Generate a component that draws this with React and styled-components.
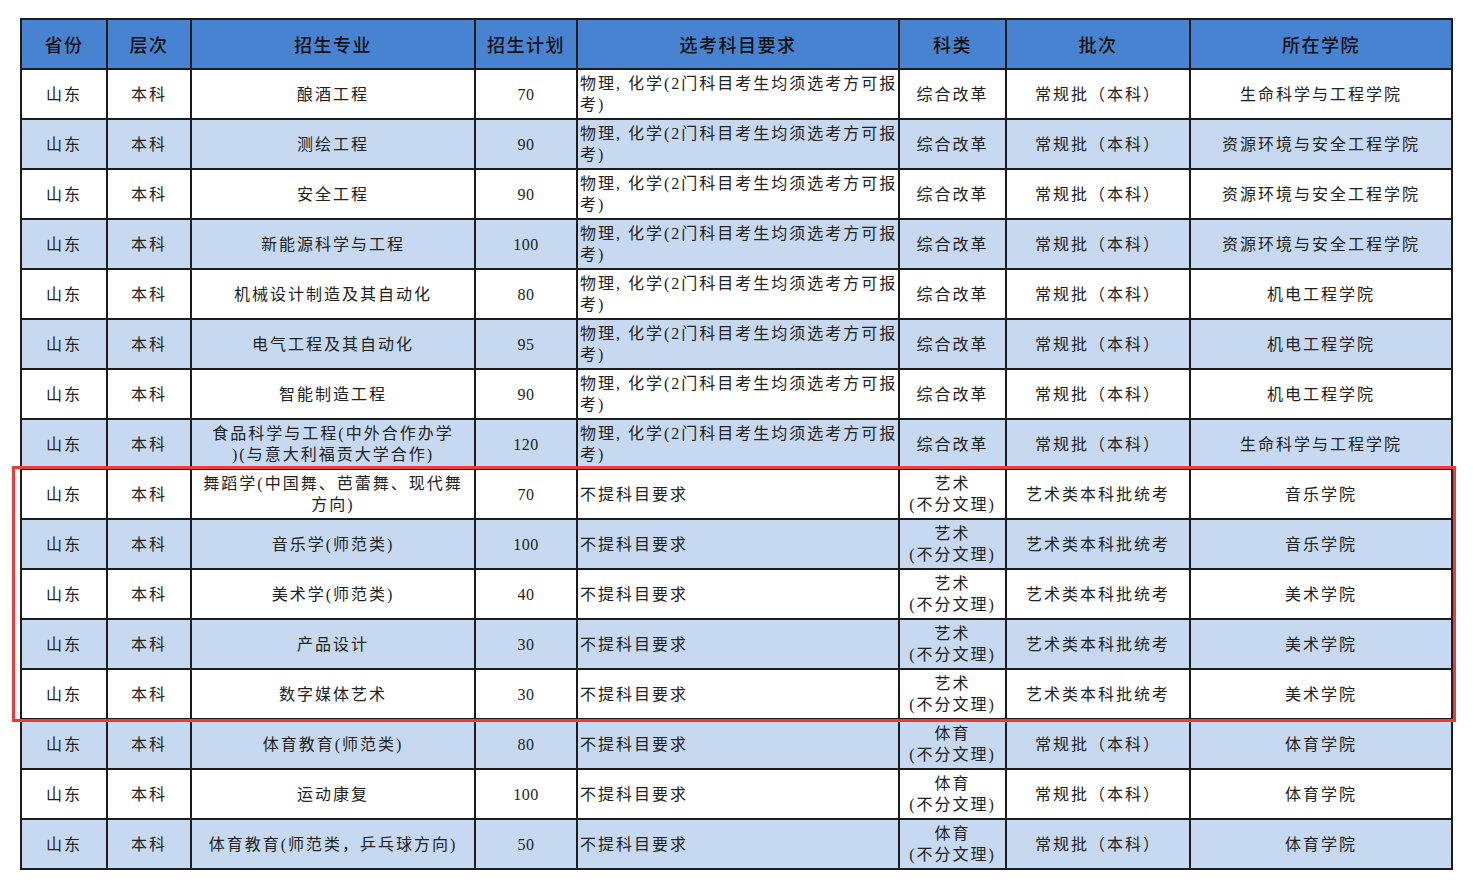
import React from "react";
import styled, { createGlobalStyle } from "styled-components";

const Global = createGlobalStyle`
  html, body { margin: 0; padding: 0; background: #ffffff; }
  body { font-family: "Liberation Serif", "Noto Sans CJK SC", serif; color: #1e1e1e; }
`;

const Page = styled.div`
  padding: 18px 0 0 20px;
  width: 1473px;
  box-sizing: border-box;
`;

const Frame = styled.div`
  position: relative;
  width: 1431px;
`;

const Table = styled.table`
  border-collapse: collapse;
  table-layout: fixed;
  width: 1431px;
  border: 2px solid #1c1c1c;
`;

const HeadCell = styled.th`
  background: #4783d0;
  border: 2px solid #1c1c1c;
  height: 48px;
  padding: 0;
  font-family: "Noto Sans CJK SC", sans-serif;
  font-size: 18px;
  font-weight: 500;
  letter-spacing: 1.5px;
  color: #111;
  text-align: center;
  vertical-align: middle;
`;

const Row = styled.tr`
  background: ${(p) => (p.$alt ? "#c6d9f1" : "#ffffff")};
`;

const Cell = styled.td`
  border: 2px solid #1c1c1c;
  height: 48px;
  padding: 0 ${(p) => (p.$left ? "2px" : "0")};
  font-family: ${(p) =>
    p.$num ? '"Liberation Serif", serif' : '"Liberation Serif", "Noto Sans CJK SC", serif'};
  font-size: 16px;
  letter-spacing: ${(p) => (p.$num ? "0.5px" : "2px")};
  line-height: 21px;
  color: #222;
  text-align: ${(p) => (p.$left ? "left" : "center")};
  vertical-align: middle;
  white-space: nowrap;
  overflow: hidden;
`;

const Line = styled.div`
  white-space: nowrap;
`;

const Highlight = styled.div`
  position: absolute;
  left: -8px;
  top: 448px;
  width: 1438px;
  height: 250px;
  border: 3px solid #ec3b3b;
  pointer-events: none;
`;

const cols = [86, 84, 284, 102, 322, 107, 184, 262];
const heads = ["省份", "层次", "招生专业", "招生计划", "选考科目要求", "科类", "批次", "所在学院"];

const REQ = ["物理, 化学(2门科目考生均须选考方可报", "考)"];
const NONE = ["不提科目要求"];
const ZH = ["综合改革"];
const ART = ["艺术", "(不分文理)"];
const PE = ["体育", "(不分文理)"];
const NORMAL = "常规批（本科）";
const ARTB = "艺术类本科批统考";

const rows = [
  [["酿酒工程"], "70", REQ, ZH, NORMAL, "生命科学与工程学院"],
  [["测绘工程"], "90", REQ, ZH, NORMAL, "资源环境与安全工程学院"],
  [["安全工程"], "90", REQ, ZH, NORMAL, "资源环境与安全工程学院"],
  [["新能源科学与工程"], "100", REQ, ZH, NORMAL, "资源环境与安全工程学院"],
  [["机械设计制造及其自动化"], "80", REQ, ZH, NORMAL, "机电工程学院"],
  [["电气工程及其自动化"], "95", REQ, ZH, NORMAL, "机电工程学院"],
  [["智能制造工程"], "90", REQ, ZH, NORMAL, "机电工程学院"],
  [["食品科学与工程(中外合作办学", ")(与意大利福贡大学合作)"], "120", REQ, ZH, NORMAL, "生命科学与工程学院"],
  [["舞蹈学(中国舞、芭蕾舞、现代舞", "方向)"], "70", NONE, ART, ARTB, "音乐学院"],
  [["音乐学(师范类)"], "100", NONE, ART, ARTB, "音乐学院"],
  [["美术学(师范类)"], "40", NONE, ART, ARTB, "美术学院"],
  [["产品设计"], "30", NONE, ART, ARTB, "美术学院"],
  [["数字媒体艺术"], "30", NONE, ART, ARTB, "美术学院"],
  [["体育教育(师范类)"], "80", NONE, PE, NORMAL, "体育学院"],
  [["运动康复"], "100", NONE, PE, NORMAL, "体育学院"],
  [["体育教育(师范类，乒乓球方向)"], "50", NONE, PE, NORMAL, "体育学院"],
];

const Lines = ({ items }) => items.map((t, i) => <Line key={i}>{t}</Line>);

export default function App() {
  return (
    <>
      <Global />
      <Page>
        <Frame>
          <Table>
            <colgroup>
              {cols.map((w, i) => (
                <col key={i} style={{ width: w }} />
              ))}
            </colgroup>
            <thead>
              <tr>
                {heads.map((h) => (
                  <HeadCell key={h}>{h}</HeadCell>
                ))}
              </tr>
            </thead>
            <tbody>
              {rows.map((r, i) => (
                <Row key={i} $alt={i % 2 === 1}>
                  <Cell>山东</Cell>
                  <Cell>本科</Cell>
                  <Cell><Lines items={r[0]} /></Cell>
                  <Cell $num>{r[1]}</Cell>
                  <Cell $left><Lines items={r[2]} /></Cell>
                  <Cell><Lines items={r[3]} /></Cell>
                  <Cell>{r[4]}</Cell>
                  <Cell>{r[5]}</Cell>
                </Row>
              ))}
            </tbody>
          </Table>
          <Highlight />
        </Frame>
      </Page>
    </>
  );
}
